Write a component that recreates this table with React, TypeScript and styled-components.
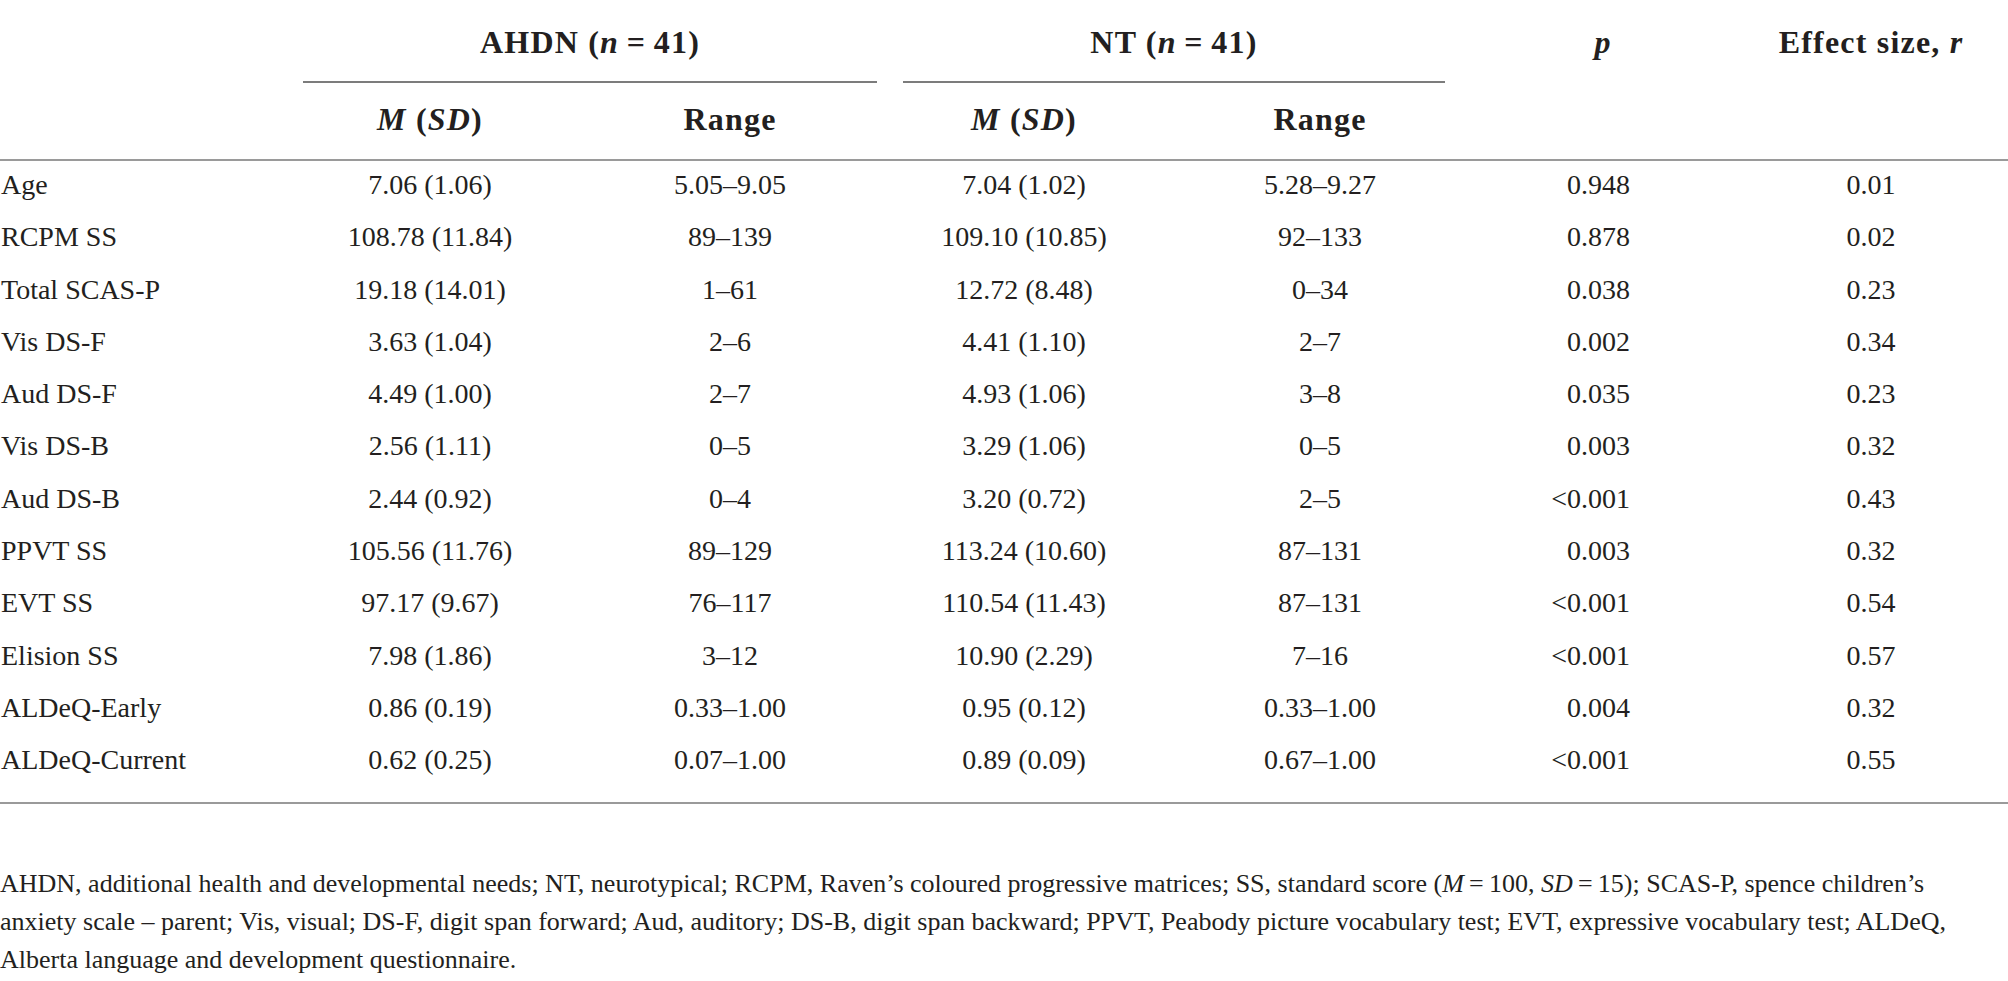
import React from "react";
import styled, { createGlobalStyle, css } from "styled-components";

const GlobalStyle = createGlobalStyle`
  html, body {
    margin: 0;
    padding: 0;
    background: #ffffff;
  }
  body {
    font-family: "Liberation Serif", "Times New Roman", serif;
    color: #231f20;
  }
`;

const columns = css`
  display: grid;
  grid-template-columns: 290px 280px 320px 268px 324px 252px 274px;
  width: 2008px;
`;

const Page = styled.div`
  width: 2008px;
`;

const Head = styled.div`
  ${columns};
  border-bottom: 2px solid #9a9a9a;
  font-weight: 700;
  font-size: 32px;
  letter-spacing: 1.2px;
`;

const GroupHead = styled.div<{ $ml: number; $mr: number }>`
  grid-column: span 2;
  margin-left: ${(p) => p.$ml}px;
  margin-right: ${(p) => p.$mr}px;
  padding: 22px 0 19px;
  line-height: 40px;
  text-align: center;
  border-bottom: 2px solid #7c7c7c;
`;

const TopHead = styled.div<{ $pr?: number }>`
  padding: 22px ${(p) => p.$pr ?? 0}px 0 0;
  line-height: 40px;
  text-align: center;
`;

const SubHead = styled.div`
  padding: 16px 0 20px;
  line-height: 40px;
  text-align: center;
`;

const Blank = styled.div``;

const Body = styled.div`
  padding: 0 0 13px;
  border-bottom: 2px solid #9a9a9a;
`;

const Row = styled.div`
  ${columns};
  height: 52.3px;
  font-size: 28px;
  line-height: 48px;
`;

const Cell = styled.div<{ $align?: "left" | "center" | "right"; $pr?: number }>`
  text-align: ${(p) => p.$align ?? "center"};
  padding-left: ${(p) => (p.$align === "left" ? 1 : 0)}px;
  padding-right: ${(p) => p.$pr ?? 0}px;
  white-space: nowrap;
`;

const Note = styled.p`
  margin: 61px 0 0;
  font-size: 26px;
  line-height: 38.4px;
  white-space: nowrap;
`;

const I = styled.i`
  font-style: italic;
`;

const rows: [string, string, string, string, string, string, string][] = [
  ["Age", "7.06 (1.06)", "5.05–9.05", "7.04 (1.02)", "5.28–9.27", "0.948", "0.01"],
  ["RCPM SS", "108.78 (11.84)", "89–139", "109.10 (10.85)", "92–133", "0.878", "0.02"],
  ["Total SCAS-P", "19.18 (14.01)", "1–61", "12.72 (8.48)", "0–34", "0.038", "0.23"],
  ["Vis DS-F", "3.63 (1.04)", "2–6", "4.41 (1.10)", "2–7", "0.002", "0.34"],
  ["Aud DS-F", "4.49 (1.00)", "2–7", "4.93 (1.06)", "3–8", "0.035", "0.23"],
  ["Vis DS-B", "2.56 (1.11)", "0–5", "3.29 (1.06)", "0–5", "0.003", "0.32"],
  ["Aud DS-B", "2.44 (0.92)", "0–4", "3.20 (0.72)", "2–5", "<0.001", "0.43"],
  ["PPVT SS", "105.56 (11.76)", "89–129", "113.24 (10.60)", "87–131", "0.003", "0.32"],
  ["EVT SS", "97.17 (9.67)", "76–117", "110.54 (11.43)", "87–131", "<0.001", "0.54"],
  ["Elision SS", "7.98 (1.86)", "3–12", "10.90 (2.29)", "7–16", "<0.001", "0.57"],
  ["ALDeQ-Early", "0.86 (0.19)", "0.33–1.00", "0.95 (0.12)", "0.33–1.00", "0.004", "0.32"],
  ["ALDeQ-Current", "0.62 (0.25)", "0.07–1.00", "0.89 (0.09)", "0.67–1.00", "<0.001", "0.55"],
];

const MSD = () => (
  <>
    <I>M</I> (<I>SD</I>)
  </>
);

export default function App() {
  return (
    <Page>
      <GlobalStyle />
      <Head>
        <Blank />
        <GroupHead $ml={13} $mr={13}>
          AHDN (<I>n</I>{"\u2009=\u2009"}41)
        </GroupHead>
        <GroupHead $ml={13} $mr={37}>
          NT (<I>n</I>{"\u2009=\u2009"}41)
        </GroupHead>
        <TopHead $pr={10}>
          <I>p</I>
        </TopHead>
        <TopHead>
          Effect size, <I>r</I>
        </TopHead>
        <Blank />
        <SubHead>
          <MSD />
        </SubHead>
        <SubHead>Range</SubHead>
        <SubHead>
          <MSD />
        </SubHead>
        <SubHead>Range</SubHead>
        <Blank />
        <Blank />
      </Head>
      <Body>
        {rows.map((r) => (
          <Row key={r[0]}>
            <Cell $align="left">{r[0]}</Cell>
            <Cell>{r[1]}</Cell>
            <Cell>{r[2]}</Cell>
            <Cell>{r[3]}</Cell>
            <Cell>{r[4]}</Cell>
            <Cell $align="right" $pr={104}>
              {r[5]}
            </Cell>
            <Cell>{r[6]}</Cell>
          </Row>
        ))}
      </Body>
      <Note>
        AHDN, additional health and developmental needs; NT, neurotypical; RCPM, Raven’s coloured progressive
        matrices; SS, standard score (<I>M</I>{"\u2009=\u2009"}100, <I>SD</I>{"\u2009=\u2009"}15); SCAS-P, spence
        children’s
        <br />
        anxiety scale – parent; Vis, visual; DS-F, digit span forward; Aud, auditory; DS-B, digit span backward;
        PPVT, Peabody picture vocabulary test; EVT, expressive vocabulary test; ALDeQ,
        <br />
        Alberta language and development questionnaire.
      </Note>
    </Page>
  );
}
